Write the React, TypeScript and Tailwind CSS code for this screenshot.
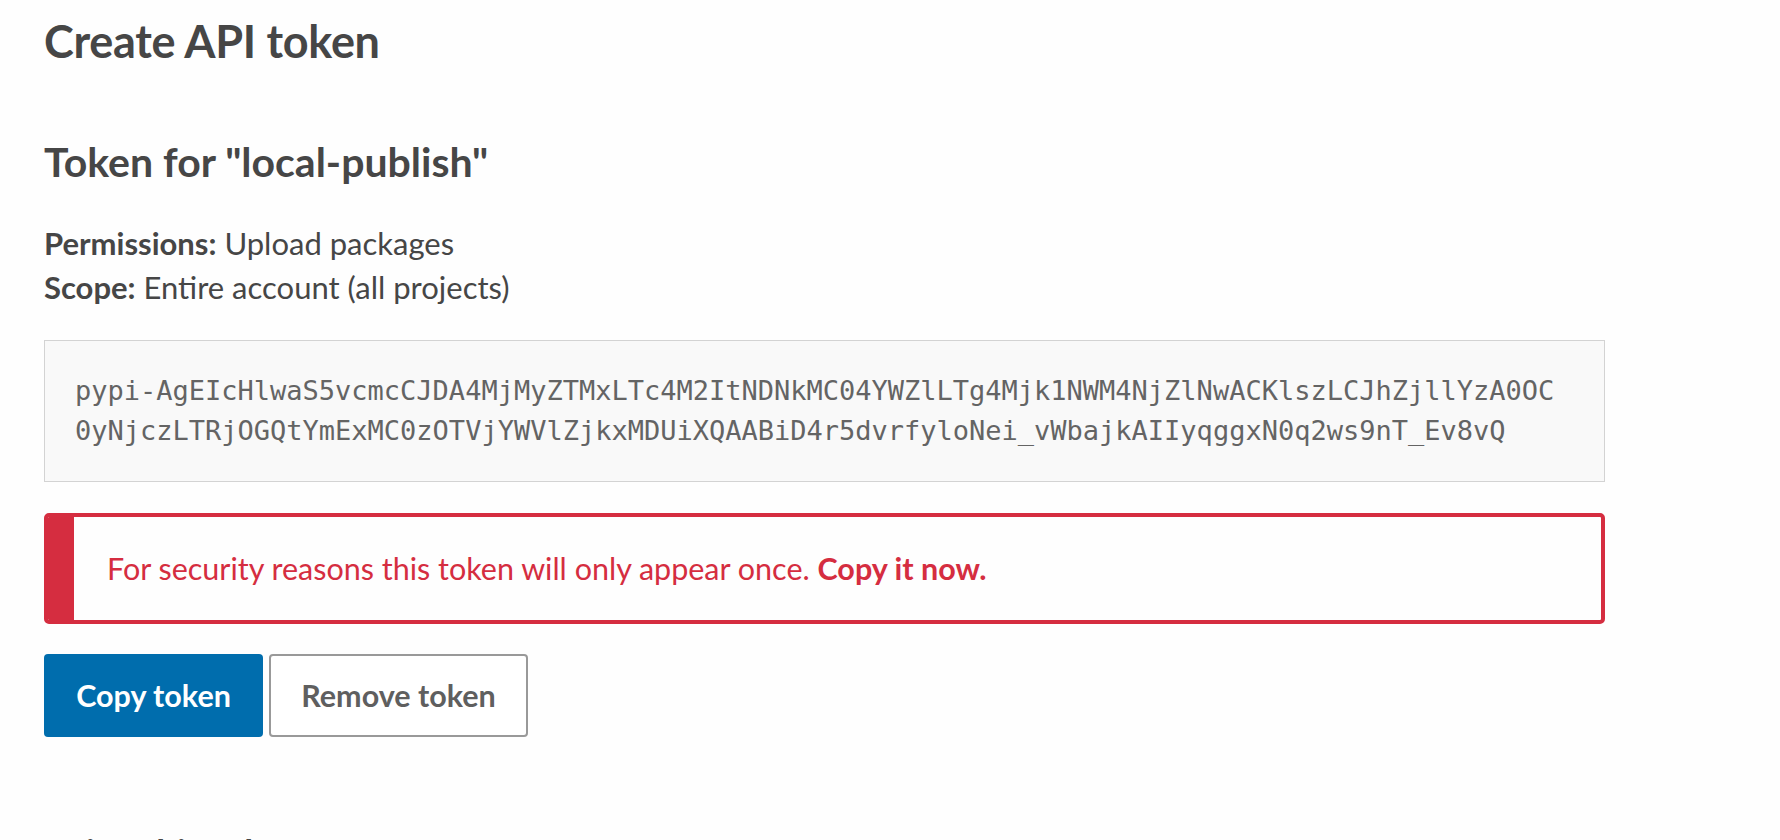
import React from 'react';

const TOKEN =
  'pypi-AgEIcHlwaS5vcmcCJDA4MjMyZTMxLTc4M2ItNDNkMC04YWZlLTg4Mjk1NWM4NjZlNwACKlszLCJhZjllYzA0OC' +
  '0yNjczLTRjOGQtYmExMC0zOTVjYWVlZjkxMDUiXQAABiD4r5dvrfyloNei_vWbajkAIIyqggxN0q2ws9nT_Ev8vQ';

export default function App() {
  return (
    <div className="h-[840px] overflow-hidden bg-[#fefefe] text-[#464646] font-['Lato',sans-serif] pl-[44px] pt-[11px]">
      <h1 className="text-[45px] leading-[60px] font-bold tracking-[-0.3px]">Create API token</h1>

      <h2 className="mt-[67px] text-[41px] leading-[48px] font-bold">Token for "local-publish"</h2>

      <div className="mt-[35px] text-[31px] leading-[44px]">
        <p>
          <strong className="font-bold">Permissions:</strong> Upload packages
        </p>
        <p>
          <strong className="font-bold">Scope:</strong> Entire account (all projects)
        </p>
      </div>

      {/* token box, wraps anywhere */}
      <div className="mt-[31px] w-[1561px] border border-[#d3d3d3] bg-[#f9f9f9] pl-[30px] pr-[40px] py-[30px] font-['DejaVu_Sans_Mono',monospace] text-[27px] leading-[40px] text-[#646464] break-all">
        {TOKEN}
      </div>

      <div className="mt-[31px] flex h-[111px] w-[1561px] overflow-hidden rounded-[5px] border-4 border-[#d52d40] bg-[#fefefe]">
        <div className="w-[26px] shrink-0 bg-[#d52d40]" />
        <p className="flex items-center pl-[33px] text-[30.5px] text-[#d52d40]">
          For security reasons this token will only appear once.&nbsp;<strong className="font-bold">Copy it now.</strong>
        </p>
      </div>

      <div className="mt-[30px] flex gap-[6px]">
        <button className="h-[83px] w-[219px] rounded-[4px] bg-[#006dad] text-[30.5px] font-bold text-white">
          Copy token
        </button>
        <button className="h-[83px] w-[259px] rounded-[4px] border-2 border-[#999999] bg-white text-[30.5px] font-bold text-[#5f5f5f]">
          Remove token
        </button>
      </div>

      <h3 className="mt-[91px] text-[36px] leading-[48px] font-bold">Using this token</h3>
    </div>
  );
}
